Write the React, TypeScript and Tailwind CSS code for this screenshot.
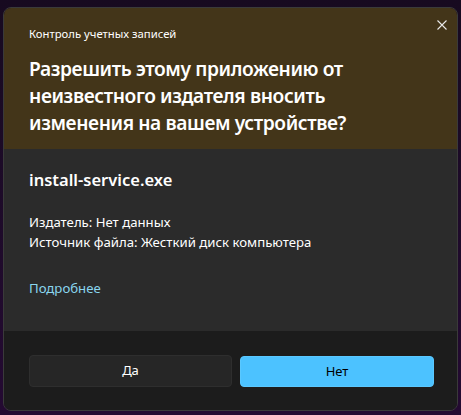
import React from "react";

export default function App() {
  return (
    <div
      className="w-[461px] h-[415px] bg-gradient-to-b from-[#170a20] to-[#240a32] pt-[7px] pl-[3px] pr-[3px] pb-[4px]"
      style={{ fontFamily: '"Noto Sans", "Open Sans", sans-serif' }}
    >
      <div className="w-[455px] h-[404px] rounded-[8px] overflow-hidden border border-[#3a3a3a] flex flex-col">
        <div className="relative h-[141px] bg-[#433519] pl-[25px] pt-[18px] shrink-0">
          <div className="text-[11.3px] leading-[16px] text-white">Контроль учетных записей</div>
          <div className="mt-[13px] text-[19.2px] leading-[27px] font-semibold text-white tracking-[-0.4px]">
            Разрешить этому приложению от
            <br />
            неизвестного издателя вносить
            <br />
            изменения на вашем устройстве?
          </div>
          <svg
            className="absolute right-[10px] top-[12px]"
            width="10"
            height="10"
            viewBox="0 0 10 10"
          >
            <path d="M0.5 0.5 L9.5 9.5 M9.5 0.5 L0.5 9.5" stroke="#e8e8e8" strokeWidth="1.1" />
          </svg>
        </div>
        <div className="h-[182px] bg-[#2b2b2b] pl-[25px] pt-[20px] shrink-0">
          <div className="text-[16.5px] leading-[22px] font-semibold text-white">install-service.exe</div>
          <div className="mt-[21px] text-[13.2px] leading-[20px] text-white">
            <div>Издатель: Нет данных</div>
            <div>Источник файла: Жесткий диск компьютера</div>
          </div>
          <div className="mt-[26px] text-[13.2px] leading-[20px] text-[#8ad6ef]">Подробнее</div>
        </div>
        <div className="flex-1 bg-[#1c1c1c] pl-[25px] pr-[23px] pt-[24px] flex gap-[8px]">
          <button className="w-[203px] h-[32px] rounded-[4px] bg-[#262626] border border-[#2e2e2e] text-white text-[13px]">
            Да
          </button>
          <button className="flex-1 h-[31px] mt-[1px] rounded-[4px] bg-[#4cc2ff] border border-[#5ac8ff] text-black text-[13px]">
            Нет
          </button>
        </div>
      </div>
    </div>
  );
}
